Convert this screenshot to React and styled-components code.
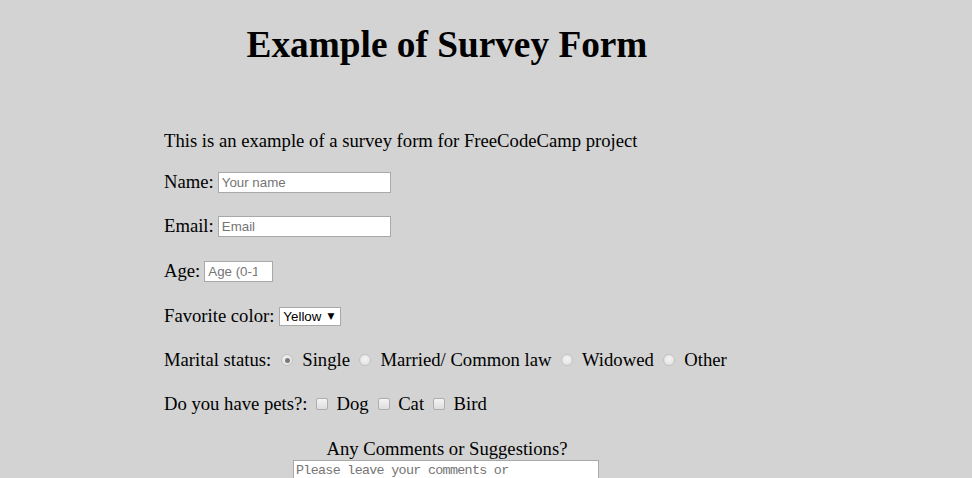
import styled, { createGlobalStyle } from "styled-components";

const Global = createGlobalStyle`
  html, body {
    margin: 0;
    background: #d3d3d3;
    font-family: "Liberation Serif", "Times New Roman", serif;
    color: #000;
  }
`;

const Page = styled.div`
  width: 894px;
  padding-top: 22px;
`;

const Title = styled.h1`
  margin: 0 0 62px;
  text-align: center;
  font-size: 37.3px;
  font-weight: bold;
  line-height: 46px;
`;

const Form = styled.form`
  display: flex;
  flex-direction: column;
  padding-left: 164px;
  font-size: 18.67px;
`;

const Row = styled.div`
  display: flex;
  align-items: center;
  height: 22px;
  margin-bottom: ${(p) => p.$gap || 22}px;
  white-space: nowrap;
`;

const Label = styled.span`
  margin-right: ${(p) => p.$space ?? 4}px;
`;

const TextInput = styled.input`
  box-sizing: border-box;
  width: ${(p) => p.$w}px;
  height: 21px;
  padding: 1px ${(p) => p.$padRight || 3}px 1px 3px;
  border: 1px solid #a9a9a9;
  background: #fff;
  font-family: "Liberation Sans", Arial, sans-serif;
  font-size: 13.33px;
  &::placeholder {
    color: #757575;
  }
`;

const SelectBox = styled.span`
  position: relative;
  display: inline-block;
`;

const Select = styled.select`
  box-sizing: border-box;
  appearance: none;
  display: block;
  width: 62px;
  height: 19px;
  border: 1px solid #a9a9a9;
  border-radius: 0;
  background: #fff;
  color: #000;
  font-family: "Liberation Sans", Arial, sans-serif;
  font-size: 13.33px;
  padding: 0 0 0 3px;
`;

const Arrow = styled.span`
  position: absolute;
  right: 7px;
  top: 3px;
  font-family: "DejaVu Sans", sans-serif;
  font-size: 9px;
  line-height: 13px;
  pointer-events: none;
`;

const Choice = styled.label`
  display: inline-flex;
  align-items: center;
`;

const Radio = styled.input.attrs({ type: "radio" })`
  appearance: none;
  box-sizing: border-box;
  width: 12px;
  height: 12px;
  margin: 0 ${(p) => p.$trail ?? 9}px 0 ${(p) => p.$lead ?? 9.5}px;
  border: 1px solid #c2c2c2;
  border-radius: 50%;
  background: radial-gradient(circle at 50% 40%, #f4f4f4 0%, #dedede 100%);
  position: relative;
  &:checked::after {
    content: "";
    position: absolute;
    left: 2.5px;
    top: 2.5px;
    width: 5px;
    height: 5px;
    border-radius: 50%;
    background: #7a7a7a;
  }
`;

const Check = styled.input.attrs({ type: "checkbox" })`
  appearance: none;
  box-sizing: border-box;
  width: 12px;
  height: 12px;
  margin: 0 ${(p) => p.$trail ?? 8.5}px 0 ${(p) => p.$lead ?? 9}px;
  border: 1px solid #adadad;
  border-radius: 2px;
  background: linear-gradient(#f4f4f4, #dddddd);
`;

const Comments = styled.div`
  display: flex;
  flex-direction: column;
  align-items: center;
  margin-left: -164px;
`;

const Comment = styled.div`
  font-size: 18.67px;
  line-height: 22px;
  margin-top: 1px;
`;

const Area = styled.textarea`
  box-sizing: border-box;
  width: 306px;
  height: 80px;
  margin: 0 0 0 -2px;
  border: 1px solid #a9a9a9;
  padding: 2px 20px 2px 2px;
  font-family: "Liberation Mono", "DejaVu Sans Mono", monospace;
  font-size: 13.33px;
  letter-spacing: -0.67px;
  line-height: 16px;
  resize: none;
  &::placeholder {
    color: #757575;
  }
`;

export default function App() {
  return (
    <Page>
      <Global />
      <Title>Example of Survey Form</Title>
      <Form>
        <Row $gap={19}>This is an example of a survey form for FreeCodeCamp project</Row>
        <Row>
          <Label>Name:</Label>
          <TextInput $w={173} placeholder="Your name" />
        </Row>
        <Row $gap={23}>
          <Label>Email:</Label>
          <TextInput $w={173} placeholder="Email" />
        </Row>
        <Row $gap={23}>
          <Label>Age:</Label>
          <TextInput $w={69} $padRight={15} placeholder="Age (0-120)" />
        </Row>
        <Row>
          <Label $space={5}>Favorite color:</Label>
          <SelectBox>
            <Select defaultValue="Yellow">
              <option>Yellow</option>
              <option>Red</option>
              <option>Blue</option>
            </Select>
            <Arrow>▼</Arrow>
          </SelectBox>
        </Row>
        <Row>
          <Label $space={0}>Marital status:</Label>
          <Choice>
            <Radio name="status" $lead={10} defaultChecked />
            Single
          </Choice>
          <Choice>
            <Radio name="status" />
            Married/ Common law
          </Choice>
          <Choice>
            <Radio name="status" />
            Widowed
          </Choice>
          <Choice>
            <Radio name="status" />
            Other
          </Choice>
        </Row>
        <Row>
          <Label $space={0}>Do you have pets?:</Label>
          <Choice>
            <Check $lead={8} $trail={9} />
            Dog
          </Choice>
          <Choice>
            <Check />
            Cat
          </Choice>
          <Choice>
            <Check />
            Bird
          </Choice>
        </Row>
        <Comments>
          <Comment>Any Comments or Suggestions?</Comment>
          <Area placeholder="Please leave your comments or suggestions here" />
        </Comments>
      </Form>
    </Page>
  );
}
